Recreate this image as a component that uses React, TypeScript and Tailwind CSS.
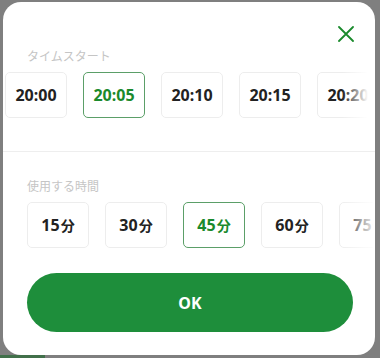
import { useState } from 'react';

const times = ['20:00', '20:05', '20:10', '20:15', '20:20'];
const durations = [15, 30, 45, 60, 75];

const font = { fontFamily: '"Noto Sans", "Noto Sans CJK JP", sans-serif' };

const Chip = ({ label, unit, active, onClick }: { label: string; unit?: string; active: boolean; onClick: () => void }) => (
  <button
    onClick={onClick}
    className={`shrink-0 w-[62px] h-[46px] rounded-[5px] border flex items-center justify-center font-bold text-[16px] ${
      active ? 'border-[#5b9f68] text-[#1a8a2c]' : 'border-[#ededed] text-[#222]'
    }`}
  >
    {label}
    {unit && <span className="text-[14px] ml-[1px]">{unit}</span>}
  </button>
);

const App = () => {
  const [start, setStart] = useState('20:05');
  const [mins, setMins] = useState(45);

  return (
    <div className="w-[380px] h-[358px] bg-[#7f7f7f] relative overflow-hidden" style={font}>
      <div className="absolute bottom-0 left-0 w-[45px] h-[3px] bg-[#41704a]" />
      <div className="ml-[3px] mt-[2px] w-[372px] h-[353px] bg-white rounded-[18px] flex flex-col">
        <div className="flex justify-end pt-[24px] pr-[21px]">
          <svg width="16" height="16" viewBox="0 0 16 16" fill="none" stroke="#1a8a2c" strokeWidth="1.8" strokeLinecap="round">
            <path d="M1 1L15 15M15 1L1 15" />
          </svg>
        </div>
        <div className="pl-[24px] mt-[7px] text-[12px] leading-[16px] text-[#c5c5c5]">タイムスタート</div>
        <div className="relative w-[365px] overflow-hidden mt-[7px]">
          <div className="flex gap-[16px] pl-[2px]">
            {times.map((t) => (
              <Chip key={t} label={t} active={t === start} onClick={() => setStart(t)} />
            ))}
          </div>
          <div className="absolute top-0 right-0 h-full w-[26px] bg-gradient-to-r from-white/0 to-white" />
        </div>
        <div className="h-px bg-[#eeeeee] mt-[33px]" />
        <div className="pl-[24px] mt-[27px] text-[12px] leading-[16px] text-[#c5c5c5]">使用する時間</div>
        <div className="relative w-[370px] overflow-hidden mt-[7px]">
          <div className="flex gap-[16px] pl-[24px]">
            {durations.map((d) => (
              <Chip key={d} label={String(d)} unit="分" active={d === mins} onClick={() => setMins(d)} />
            ))}
          </div>
          <div className="absolute top-0 right-0 h-full w-[34px] bg-gradient-to-r from-white/0 to-white/90" />
        </div>
        <button className="ml-[24px] mt-[25px] w-[326px] h-[59px] rounded-full bg-[#1e8e3b] text-white font-bold text-[16px]">
          OK
        </button>
      </div>
    </div>
  );
};

export default App;
